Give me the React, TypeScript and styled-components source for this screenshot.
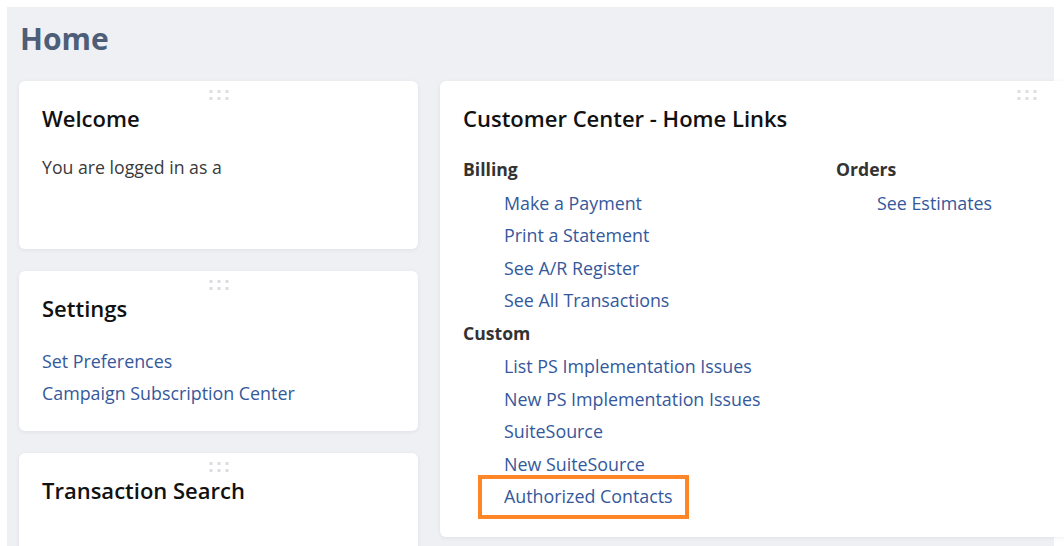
import React from "react";
import styled, { createGlobalStyle } from "styled-components";

const Global = createGlobalStyle`
  html, body { margin: 0; padding: 0; background: #ffffff; }
  body { font-family: "Open Sans", "Noto Sans", "Liberation Sans", sans-serif; overflow: hidden; }
  * { box-sizing: border-box; }
`;

const Page = styled.div`
  padding: 7px 0 0 7px;
  width: 1064px;
  height: 546px;
  overflow: hidden;
`;

const Panel = styled.div`
  width: 1047px;
  height: 600px;
  background: #eff0f4;
  padding: 12px 0 0 12px;
`;

const PageTitle = styled.h1`
  margin: 0 0 0 1px;
  font-size: 30px;
  line-height: 40px;
  font-weight: 700;
  color: #4d5e78;
`;

const Columns = styled.div`
  display: flex;
  align-items: flex-start;
  gap: 22px;
  margin-top: 22px;
`;

const LeftColumn = styled.div`
  display: flex;
  flex-direction: column;
  gap: 22px;
  width: 399px;
  flex: none;
`;

const Card = styled.section<{ $h?: number; $w?: number }>`
  position: relative;
  flex: none;
  width: ${(p) => (p.$w ? `${p.$w}px` : "100%")};
  height: ${(p) => (p.$h ? `${p.$h}px` : "auto")};
  background: #ffffff;
  border-radius: 6px;
  box-shadow: 0 1px 4px rgba(40, 50, 80, 0.08);
  padding: 22px 23px 25px 23px;
`;

const Handle = styled.div`
  position: absolute;
  top: 9px;
  left: 50%;
  transform: translateX(-50%);
  display: grid;
  grid-template-columns: repeat(3, 3px);
  grid-auto-rows: 3px;
  column-gap: 5px;
  row-gap: 4px;
  span {
    background: #dcdde0;
    border-radius: 0.5px;
  }
`;

const CardTitle = styled.h2`
  margin: 0;
  font-size: 22px;
  line-height: 30px;
  font-weight: 600;
  color: #111111;
`;

const BodyText = styled.p`
  margin: 18px 0 0 0;
  font-size: 17.7px;
  line-height: 32px;
  color: #3a3a3a;
`;

const LinkList = styled.div<{ $indent?: number; $top?: number }>`
  display: flex;
  flex-direction: column;
  align-items: flex-start;
  margin-top: ${(p) => p.$top ?? 0}px;
  padding-left: ${(p) => p.$indent ?? 0}px;
`;

const LinkItem = styled.a<{ $highlight?: boolean }>`
  position: relative;
  display: inline-block;
  font-size: 17.85px;
  line-height: 32.4px;
  color: #34589b;
  text-decoration: none;
  cursor: pointer;
  ${(p) =>
    p.$highlight
      ? `&::after {
          content: "";
          position: absolute;
          top: -5px;
          bottom: -7px;
          left: -26px;
          right: -16px;
          border: 4px solid #fd8628;
          pointer-events: none;
        }`
      : ""}
`;

const LinkGrid = styled.div`
  display: grid;
  grid-template-columns: 373px 1fr;
  margin-top: 20px;
`;

const Section = styled.div`
  display: flex;
  flex-direction: column;
`;

const SectionHeader = styled.div`
  font-size: 17.6px;
  line-height: 32.4px;
  font-weight: 700;
  color: #333333;
  margin-bottom: 1.5px;
`;

const Group = styled.div``;

const DragHandle = () => (
  <Handle>
    {Array.from({ length: 6 }).map((_, i) => (
      <span key={i} />
    ))}
  </Handle>
);

type LinkGroup = { title: string; links: { label: string; highlight?: boolean }[] };

const column1: LinkGroup[] = [
  {
    title: "Billing",
    links: [
      { label: "Make a Payment" },
      { label: "Print a Statement" },
      { label: "See A/R Register" },
      { label: "See All Transactions" },
    ],
  },
  {
    title: "Custom",
    links: [
      { label: "List PS Implementation Issues" },
      { label: "New PS Implementation Issues" },
      { label: "SuiteSource" },
      { label: "New SuiteSource" },
      { label: "Authorized Contacts", highlight: true },
    ],
  },
];

const column2: LinkGroup[] = [
  { title: "Orders", links: [{ label: "See Estimates" }] },
];

const renderColumn = (groups: LinkGroup[]) => (
  <Section>
    {groups.map((g) => (
      <Group key={g.title}>
        <SectionHeader>{g.title}</SectionHeader>
        <LinkList $indent={41}>
          {g.links.map((l) => (
            <LinkItem key={l.label} $highlight={l.highlight}>
              {l.label}
            </LinkItem>
          ))}
        </LinkList>
      </Group>
    ))}
  </Section>
);

export default function App() {
  return (
    <>
      <Global />
      <Page>
        <Panel>
          <PageTitle>Home</PageTitle>
          <Columns>
            <LeftColumn>
              <Card $h={168}>
                <DragHandle />
                <CardTitle>Welcome</CardTitle>
                <BodyText>You are logged in as a</BodyText>
              </Card>
              <Card $h={160}>
                <DragHandle />
                <CardTitle>Settings</CardTitle>
                <LinkList $top={22}>
                  <LinkItem>Set Preferences</LinkItem>
                  <LinkItem>Campaign Subscription Center</LinkItem>
                </LinkList>
              </Card>
              <Card $h={200}>
                <DragHandle />
                <CardTitle>Transaction Search</CardTitle>
              </Card>
            </LeftColumn>
            <Card $w={1174}>
              <DragHandle />
              <CardTitle>Customer Center - Home Links</CardTitle>
              <LinkGrid>
                {renderColumn(column1)}
                {renderColumn(column2)}
              </LinkGrid>
            </Card>
          </Columns>
        </Panel>
      </Page>
    </>
  );
}
